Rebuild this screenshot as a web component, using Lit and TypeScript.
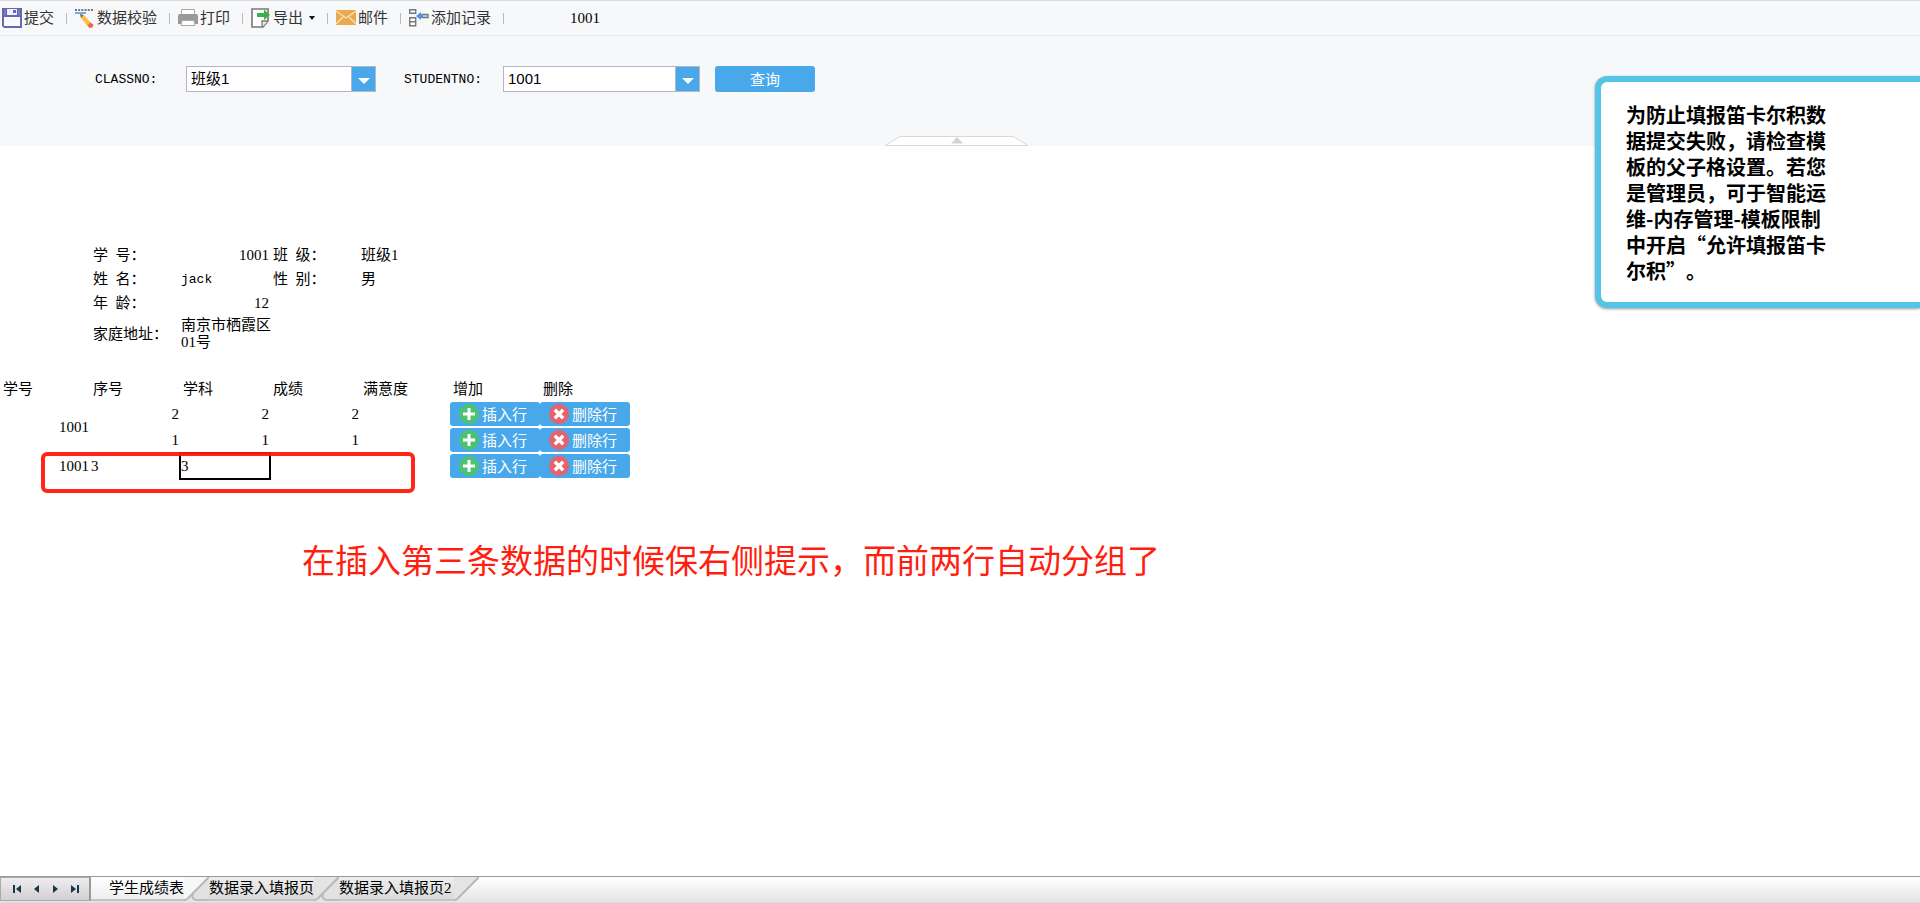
import { LitElement, html, css, svg, nothing } from "lit";
import { customElement, state } from "lit/decorators.js";

const icons: Record<string, unknown> = {
  save: svg`<path d="M0 0h20v20H2L0 18z" fill="#6768ae"/><path d="M5 1h10v6H5z" fill="#f0f0f8"/><path d="M11 2h3v3h-3z" fill="#6768ae"/><path d="M2 9h16v9H2z" fill="#fafafc"/><path d="M2 2h2v5H2zM16 2h2v5h-2z" fill="#7c7dbb"/>`,
  verify: svg`<path d="M0 2h19" stroke="#777" stroke-width="2" stroke-dasharray="2 1.2"/><path d="M0 5h11" stroke="#459cf0" stroke-width="1.6"/><path d="M5 6l4 1 7 8-3.5 3L6 10z" fill="#fbc03f"/><path d="M5 6l3.5 1L6 10z" fill="#667777"/><path d="M15 14.500l3.500 2-1 3-3 .5-2-2.500z" fill="#ef654d"/>`,
  print: svg`<path d="M3.500 8V1.500h13V8" fill="#fff" stroke="#aaa"/><path d="M1 6h18l1 2v8H0V8z" fill="#999"/><path d="M4 12.500h12l1 5H3z" fill="#fff" stroke="#aaa"/>`,
  export: svg`<path d="M1 1h16v12l-5 6H1z" fill="#fff" stroke="#777" stroke-width="1.6"/><path d="M11 19v-6h6" fill="#eee" stroke="#777" stroke-width="1.300"/><path d="M6 5h7V1.500L19 7l-6 5V9H6z" fill="#38b14d"/>`,
  mail: svg`<path d="M0 2h20v15H0z" fill="#e8a94f"/><path d="M0 3l10 7 10-7M0 16l7-7M20 16l-7-7" fill="none" stroke="#fbe3b8" stroke-width="1.300"/>`,
  record: svg`<path d="M.7 1.700h6v3.600h-6zM.7 9.700h6v8h-6zM.7 13.700h6" fill="#fff" stroke="#777" stroke-width="1.400"/><path d="M7 8l5-4v3h2v2h-2v3z" fill="#3f97f4"/><path d="M13 6.500h6v3h-6z" fill="#ccddee" stroke="#667788" stroke-width="1.300"/>`,
  plus: svg`<circle cx="10" cy="10" r="10" fill="#4cc272"/><path d="M10 4v12M4 10h12" stroke="#fff" stroke-width="3"/>`,
  cross: svg`<circle cx="10" cy="10" r="10" fill="#e7626a"/><path d="M5.800 5.800l8.400 8.400M14.200 5.800l-8.400 8.400" stroke="#fff" stroke-width="3.400"/>`,
};

const icon = (name: string) =>
  html`<svg class="icon" viewBox="0 0 20 20" aria-hidden="true">${icons[name]}</svg>`;

@customElement("report-toolbar")
class ReportToolbar extends LitElement {
  static styles = css`
    :host {
      display: flex;
      align-items: center;
      height: 34px;
      padding-left: 2px;
      background: #f7f8fa;
      border-top: 1px solid #d9dade;
      border-bottom: 1px solid #e6e7e9;
    }
    .tool {
      display: flex;
      align-items: center;
      gap: 2px;
      border: 0;
      padding: 0 12px 0 0;
      background: none;
      color: #333;
      font: 15px/24px "Noto Sans CJK SC", sans-serif;
      white-space: nowrap;
    }
    .text {
      padding-bottom: 2px;
    }
    .icon {
      width: 20px;
      height: 20px;
    }
    .caret {
      margin-left: 4px;
      border: 3px solid transparent;
      border-top: 4px solid #111;
      border-bottom: 0;
    }
    .sep {
      width: 1px;
      height: 11px;
      margin-right: 8px;
      background: #bbb;
    }
    .param {
      margin-left: 58px;
      font: 15px/24px "Liberation Serif", serif;
    }
  `;

  private tools = [
    { icon: "save", text: "提交" },
    { icon: "verify", text: "数据校验" },
    { icon: "print", text: "打印" },
    { icon: "export", text: "导出", menu: true },
    { icon: "mail", text: "邮件" },
    { icon: "record", text: "添加记录" },
  ];

  render() {
    return html`
      ${this.tools.map(
        (t) => html`<button class="tool">
            ${icon(t.icon)}<span class="text">${t.text}</span>${t.menu ? html`<span class="caret"></span>` : nothing}</button
          ><span class="sep"></span>`
      )}
      <span class="param">1001</span>
    `;
  }
}

@customElement("query-panel")
class QueryPanel extends LitElement {
  static styles = css`
    :host {
      display: flex;
      flex-direction: column;
      justify-content: space-between;
      height: 110px;
      background: #f7f8fa;
    }
    .fields {
      display: flex;
      align-items: flex-start;
      padding: 30px 0 0 95px;
    }
    label {
      font: 13px/28px "Liberation Mono", monospace;
    }
    .classno {
      width: 91px;
    }
    .studentno {
      width: 99px;
      margin-left: 28px;
    }
    .combo {
      display: grid;
      grid-template-columns: 1fr 24px;
      box-sizing: border-box;
      width: 190px;
      height: 26px;
      border: 1px solid #b3b6c9;
      background: #fff;
    }
    .combo.wide {
      width: 197px;
    }
    select {
      grid-area: 1 / 1 / 2 / 3;
      appearance: none;
      border: 0;
      padding: 0 28px 0 4px;
      background: none;
      color: #000;
      font: 15px/24px "Liberation Sans", "Noto Sans CJK SC", sans-serif;
    }
    .arrow {
      grid-area: 1 / 2;
      display: grid;
      place-items: center;
      border-left: 1px solid #b3b6c9;
      background: #48a8ea;
      pointer-events: none;
    }
    .arrow svg {
      width: 12px;
      height: 6px;
      padding-top: 4px;
    }
    .query {
      width: 100px;
      height: 26px;
      margin-left: 15px;
      border: 0;
      border-radius: 3px;
      padding: 0;
      background: #48a8ea;
      color: #fff;
      font: 15px/26px "Noto Sans CJK SC", sans-serif;
    }
    .fold {
      align-self: center;
      border: 0;
      padding: 0 7px 0 0;
      background: none;
      line-height: 0;
    }
  `;

  render() {
    const arrow = html`<span class="arrow"
      ><svg viewBox="0 0 12 6"><path d="M0 0h12L6 6z" fill="#fff" /></svg
    ></span>`;
    return html`
      <div class="fields">
        <label class="classno" for="classno">CLASSNO:</label>
        <div class="combo">
          <select id="classno"><option>班级1</option></select>${arrow}
        </div>
        <label class="studentno" for="studentno">STUDENTNO:</label>
        <div class="combo wide">
          <select id="studentno"><option>1001</option></select>${arrow}
        </div>
        <button class="query">查询</button>
      </div>
      <button class="fold" aria-label="收起">
        <svg width="143" height="10" viewBox="0 0 143 10">
          <path d="M0 9.500L15 .5h113l15 9z" fill="#fff" stroke="#d9d9d9" />
          <path d="M66 7.500L72 1l6 6.500z" fill="#d3d3d3" />
        </svg>
      </button>
    `;
  }
}

@customElement("report-sheet")
class ReportSheet extends LitElement {
  static styles = css`
    :host {
      display: block;
      position: relative;
      padding-top: 97px;
      font: 15px/17px "Liberation Serif", "Noto Sans CJK SC", serif;
    }
    table {
      table-layout: fixed;
      width: 630px;
      border-collapse: collapse;
    }
    .info {
      margin-bottom: 24px;
    }
    th,
    td {
      height: 24px;
      box-sizing: border-box;
      padding: 0 1px;
      font-weight: 400;
      text-align: left;
      white-space: nowrap;
    }
    th {
      padding-left: 3px;
    }
    .address th,
    .address td {
      height: 38px;
    }
    .rows td {
      height: 26px;
    }
    .num {
      text-align: right;
    }
    .latin {
      font: 13px/17px "Liberation Mono", monospace;
    }
    .rows .cell {
      padding: 0;
    }
    .active {
      display: block;
      box-sizing: border-box;
      width: calc(100% + 2px);
      height: 28px;
      margin: -1px;
      border: 2px solid #000;
      border-radius: 0;
      padding: 0;
      background: none;
      font: inherit;
      outline: none;
    }
    .rows .action {
      padding: 0;
    }
    .action button {
      display: flex;
      align-items: center;
      gap: 3px;
      width: 100%;
      height: 24px;
      border: 0;
      border-radius: 3px;
      padding: 0 9px;
      background: #48a8ea;
      color: #fff;
      font: 15px/24px "Noto Sans CJK SC", sans-serif;
    }
    .icon {
      flex: none;
      width: 20px;
      height: 20px;
    }
    .mark {
      position: absolute;
      left: 41px;
      top: 306px;
      box-sizing: border-box;
      width: 374px;
      height: 41px;
      border: 4px solid rgba(255, 24, 10, 0.94);
      border-radius: 6px;
      pointer-events: none;
    }
    .remark {
      position: absolute;
      left: 302px;
      top: 389px;
      margin: 0;
      color: #ff1e10;
      font: 33px/48px "Noto Sans CJK SC", sans-serif;
      white-space: nowrap;
    }
  `;

  private heads = ["学号", "序号", "学科", "成绩", "满意度", "增加", "删除"];

  private actions() {
    return html`<td class="action"><button>${icon("plus")}插入行</button></td>
      <td class="action"><button>${icon("cross")}删除行</button></td>`;
  }

  render() {
    return html`
      <table class="info">
        <tr>
          <td></td>
          <th>学&nbsp;&nbsp;号：</th>
          <td class="num">1001</td>
          <th>班&nbsp;&nbsp;级：</th>
          <td>班级1</td>
          <td></td>
          <td></td>
        </tr>
        <tr>
          <td></td>
          <th>姓&nbsp;&nbsp;名：</th>
          <td class="latin">jack</td>
          <th>性&nbsp;&nbsp;别：</th>
          <td>男</td>
        </tr>
        <tr>
          <td></td>
          <th>年&nbsp;&nbsp;龄：</th>
          <td class="num">12</td>
        </tr>
        <tr class="address">
          <td></td>
          <th>家庭地址：</th>
          <td>南京市栖霞区<br />01号</td>
        </tr>
      </table>
      <table>
        <thead>
          <tr>
            ${this.heads.map((h) => html`<th>${h}</th>`)}
          </tr>
        </thead>
        <tbody class="rows">
          <tr>
            <td class="num" rowspan="2">1001</td>
            <td class="num">2</td>
            <td class="num">2</td>
            <td class="num">2</td>
            <td></td>
            ${this.actions()}
          </tr>
          <tr>
            <td class="num">1</td>
            <td class="num">1</td>
            <td class="num">1</td>
            <td></td>
            ${this.actions()}
          </tr>
          <tr>
            <td class="num">1001</td>
            <td>3</td>
            <td class="cell"><input class="active" aria-label="学科" value="3" /></td>
            <td></td>
            <td></td>
            ${this.actions()}
          </tr>
        </tbody>
      </table>
      <div class="mark"></div>
      <p class="remark">在插入第三条数据的时候保右侧提示，而前两行自动分组了</p>
    `;
  }
}

@customElement("sheet-tabs")
class SheetTabs extends LitElement {
  static styles = css`
    :host {
      display: flex;
      height: 25px;
      border-top: 1px solid #999;
      border-bottom: 1px solid #d5dfe9;
      background: linear-gradient(#fff, #e4e4e4);
    }
    .nav {
      display: flex;
      align-items: center;
      justify-content: space-between;
      box-sizing: border-box;
      width: 91px;
      height: 24px;
      border: 1px solid #aaa;
      border-right: 2px solid #999;
      padding: 0 9px 0 11px;
      background: linear-gradient(#eeecee, #d2d0d2);
    }
    .nav button {
      border: 0;
      padding: 0;
      background: none;
      line-height: 0;
    }
    .tab {
      box-sizing: border-box;
      height: 24px;
      border: 0;
      border-bottom: 2px solid #c4c4c4;
      padding: 0;
      background: linear-gradient(#eee, #dadada);
      color: #000;
      font: 15px/22px "Liberation Serif", "Noto Sans CJK SC", sans-serif;
      white-space: nowrap;
    }
    .tab.current {
      padding-left: 18px;
      background: linear-gradient(#fff, #eee);
    }
    .tab.last {
      padding-right: 2px;
    }
    .cap {
      flex: none;
      width: 25px;
      height: 24px;
    }
  `;

  @state() private current = 0;
  private tabs = ["学生成绩表", "数据录入填报页", "数据录入填报页2"];

  render() {
    const glyphs: [string, string][] = [
      ["首页", "M1 0h2v8H1zM9 0v8L4 4z"],
      ["上一页", "M7 0v8L2 4z"],
      ["下一页", "M2 0v8l5-4z"],
      ["末页", "M0 0v8l5-4zM6 0h2v8H6z"],
    ];
    const last = this.tabs.length - 1;
    return html`
      <div class="nav">
        ${glyphs.map(
          ([name, d]) =>
            html`<button aria-label=${name}><svg width="9" height="8" viewBox="0 0 9 8"><path d=${d} fill="#17364a" /></svg></button>`
        )}
      </div>
      ${this.tabs.map(
        (t, i) => html`<button class="tab ${i === this.current ? "current" : ""} ${i === last ? "last" : ""}">${t}</button
          ><svg class="cap" viewBox="0 0 24 24" preserveAspectRatio="none">
            <path d="M0 0h24L2 23H0z" fill=${i === this.current ? "#f7f7f7" : "#e4e4e4"} />
            ${i < last
              ? svg`<path d="M24 0v23H12q-6-1-3-7z" fill="#e2e2e2"/><path d="M24 23H12q-6-1-3-7" fill="none" stroke="#bdbdbd" stroke-width="2"/>`
              : nothing}
            <path d="M0 23q3 0 5-3L24 0" fill="none" stroke="#b8b8b8" stroke-width="2" />
          </svg>`
      )}
    `;
  }
}

@customElement("app-root")
class AppRoot extends LitElement {
  static styles = css`
    :host {
      display: flex;
      flex-direction: column;
      position: relative;
      min-height: 100vh;
      overflow: hidden;
      background: #fff;
      color: #000;
    }
    report-sheet {
      flex: 1;
    }
    .notice {
      position: absolute;
      top: 76px;
      right: 0;
      box-sizing: border-box;
      width: 325px;
      border: 6px solid #56c4e6;
      border-right: 0;
      border-radius: 12px 0 0 12px;
      padding: 20px 94px 18px 25px;
      background: #fff;
      box-shadow: 0 1px 3px rgba(0, 0, 0, 0.4);
      font: 700 20px/26px "Noto Sans CJK SC", sans-serif;
      text-spacing-trim: space-all;
    }
  `;

  render() {
    return html`
      <report-toolbar></report-toolbar>
      <query-panel></query-panel>
      <report-sheet></report-sheet>
      <sheet-tabs></sheet-tabs>
      <div class="notice" role="alert">为防止填报笛卡尔积数据提交失败，请检查模板的父子格设置。若您是管理员，可于智能运维-内存管理-模板限制中开启“允许填报笛卡尔积”。</div>
    `;
  }
}
